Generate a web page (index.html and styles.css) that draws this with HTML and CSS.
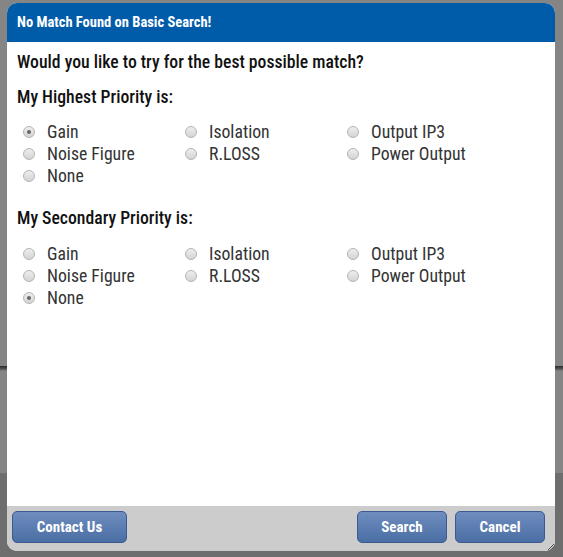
FILE: index.html
```html
<!DOCTYPE html>
<html lang="en">
<head>
  <meta charset="UTF-8" />
  <meta name="viewport" content="width=device-width, initial-scale=1.0"/>
  <title>No Match Found</title>
  <link rel="stylesheet" href="styles.css">
</head>
<body>
  <div class="dialog">
    <div class="dialog-title">No Match Found on Basic Search!</div>

    <div class="dialog-body">
      <p class="question">Would you like to try for the best possible match?</p>

      <p class="heading">My Highest Priority is:</p>
      <div class="options">
        <label class="option"><input type="radio" name="highest" checked> Gain</label>
        <label class="option"><input type="radio" name="highest"> Isolation</label>
        <label class="option"><input type="radio" name="highest"> Output IP3</label>
        <label class="option"><input type="radio" name="highest"> Noise Figure</label>
        <label class="option"><input type="radio" name="highest"> R.LOSS</label>
        <label class="option"><input type="radio" name="highest"> Power Output</label>
        <label class="option"><input type="radio" name="highest"> None</label>
      </div>

      <p class="heading">My Secondary Priority is:</p>
      <div class="options secondary">
        <label class="option"><input type="radio" name="secondary"> Gain</label>
        <label class="option"><input type="radio" name="secondary"> Isolation</label>
        <label class="option"><input type="radio" name="secondary"> Output IP3</label>
        <label class="option"><input type="radio" name="secondary"> Noise Figure</label>
        <label class="option"><input type="radio" name="secondary"> R.LOSS</label>
        <label class="option"><input type="radio" name="secondary"> Power Output</label>
        <label class="option"><input type="radio" name="secondary" checked> None</label>
      </div>
    </div>

    <div class="dialog-buttons">
      <button class="btn btn-contact">Contact Us</button>
      <div class="right-buttons">
        <button class="btn">Search</button>
        <button class="btn">Cancel</button>
      </div>
    </div>
    <span class="grip"></span>
  </div>
</body>
</html>
```

FILE: styles.css
```css
body {
  margin: 0;
  height: 557px;
  overflow: hidden;
  font-family: Roboto, "Noto Sans", sans-serif;
  font-stretch: condensed;
  background: linear-gradient(to bottom,
    #858585 0, #858585 366px,
    #2a2a2a 366px, #555 369px,
    #858585 371px, #858585 473px,
    #6e6e6e 473px, #6e6e6e 100%);
}
.dialog {
  position: relative;
  margin: 3px 0 0 7px;
  width: 548px;
  height: 548px;
  border-radius: 10px;
  overflow: hidden;
  background: #fff;
  display: flex;
  flex-direction: column;
}
.dialog-title {
  height: 39px;
  line-height: 39px;
  padding: 0 10px;
  background: #005ca9;
  color: #fff;
  font-weight: bold;
  font-size: 14.5px;
}
.dialog-body {
  flex: 1;
  padding: 10px 10px 0;
  color: #111;
}
.question, .heading {
  margin: 0;
  font-size: 17.7px;
  font-weight: 500;
  line-height: 20px;
}
.heading {
  margin-top: 15px;
}
.options {
  display: grid;
  grid-template-columns: 162px 162px 162px;
  margin: 14px 0 0 4px;
}
.options.secondary {
  margin-top: 15px;
}
.options + .heading {
  margin-top: 21px;
}
.option {
  display: flex;
  align-items: center;
  height: 22px;
  font-size: 17.7px;
  color: #333;
}
.option input {
  appearance: none;
  width: 12px;
  height: 12px;
  margin: 0 12px 0 2px;
  border: 1px solid #b4b4b4;
  border-radius: 50%;
  background: linear-gradient(to bottom, #eee, #d4d4d4);
  box-sizing: border-box;
  position: relative;
}
.option input:checked::after {
  content: "";
  position: absolute;
  left: 3px;
  top: 3px;
  width: 4px;
  height: 4px;
  border-radius: 50%;
  background: #666;
}
.dialog-buttons {
  height: 45px;
  background: #ccc;
  display: flex;
  justify-content: space-between;
  align-items: flex-start;
  padding: 5px 10px 0 5px;
  box-sizing: border-box;
}
.right-buttons {
  display: flex;
  gap: 8px;
}
.btn {
  height: 32px;
  width: 90px;
  border: 1px solid #3b5a8f;
  border-radius: 5px;
  background: linear-gradient(to bottom, #6f8dbf, #4a6ea4);
  color: #fff;
  font-family: inherit;
  font-stretch: condensed;
  font-weight: bold;
  font-size: 15px;
  cursor: pointer;
}
.btn-contact {
  width: 115px;
}
.grip {
  position: absolute;
  right: 1px;
  bottom: 1px;
  width: 7px;
  height: 7px;
  background: repeating-linear-gradient(135deg, transparent 0, transparent 1px, #555 1px, #555 2px);
  clip-path: polygon(100% 0, 100% 100%, 0 100%);
}
```
